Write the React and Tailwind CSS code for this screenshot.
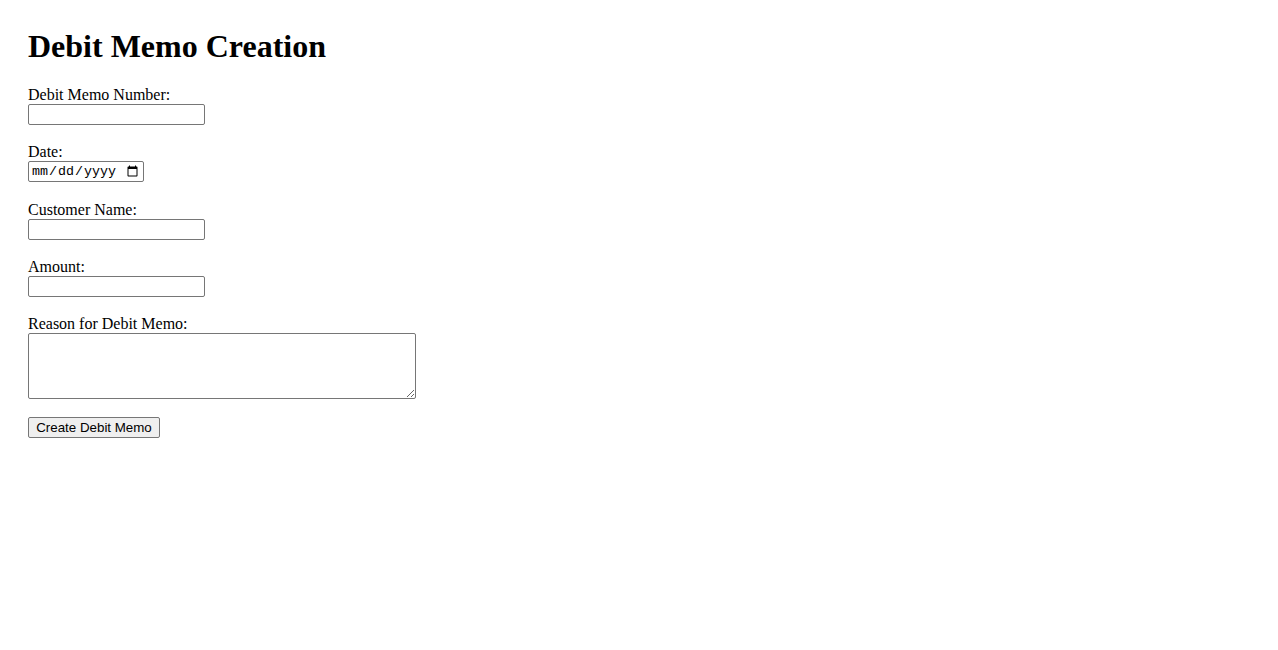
export default function App() {
  const labelCls = "block text-[16px] leading-[18px] text-black";
  const inputCls =
    "block h-[21px] w-[177px] border border-[#767676] rounded-[2px] bg-white px-[2px] py-[1px] text-[13.33px] font-['Liberation_Sans',Arial,sans-serif] outline-none";
  return (
    <div className="min-h-[650px] bg-white pt-[28px] pl-[28px] font-['Liberation_Serif','Times_New_Roman',serif] text-black">
      <h1 className="text-[32px] font-bold leading-[37px] mb-[21px]">Debit Memo Creation</h1>
      <form onSubmit={(e) => e.preventDefault()}>
        <label className={labelCls} htmlFor="num">Debit Memo Number:</label>
        <input id="num" type="text" className={inputCls + " mb-[18.25px]"} />

        <label className={labelCls} htmlFor="date">Date:</label>
        <input
          id="date"
          type="date"
          className="block h-[21px] w-[116px] border border-[#767676] rounded-[2px] bg-white px-[2px] py-[1px] text-[13.33px] font-['Liberation_Mono','Courier_New',monospace] outline-none mb-[18.25px]"
        />

        <label className={labelCls} htmlFor="cust">Customer Name:</label>
        <input id="cust" type="text" className={inputCls + " mb-[18.25px]"} />

        <label className={labelCls} htmlFor="amt">Amount:</label>
        <input id="amt" type="text" className={inputCls + " mb-[18.25px]"} />

        <label className={labelCls} htmlFor="reason">Reason for Debit Memo:</label>
        <textarea
          id="reason"
          className="block h-[66px] w-[388px] border border-[#767676] rounded-[2px] bg-white px-[2px] py-[2px] text-[13.33px] font-['Liberation_Mono','Courier_New',monospace] outline-none mb-[18px]"
        />

        <button
          type="submit"
          className="block h-[21px] w-[132px] border border-[#767676] rounded-[2px] bg-[#efefef] px-[6px] text-[13.33px] leading-[15px] text-black font-['Liberation_Sans',Arial,sans-serif]"
        >
          Create Debit Memo
        </button>
      </form>
    </div>
  );
}
